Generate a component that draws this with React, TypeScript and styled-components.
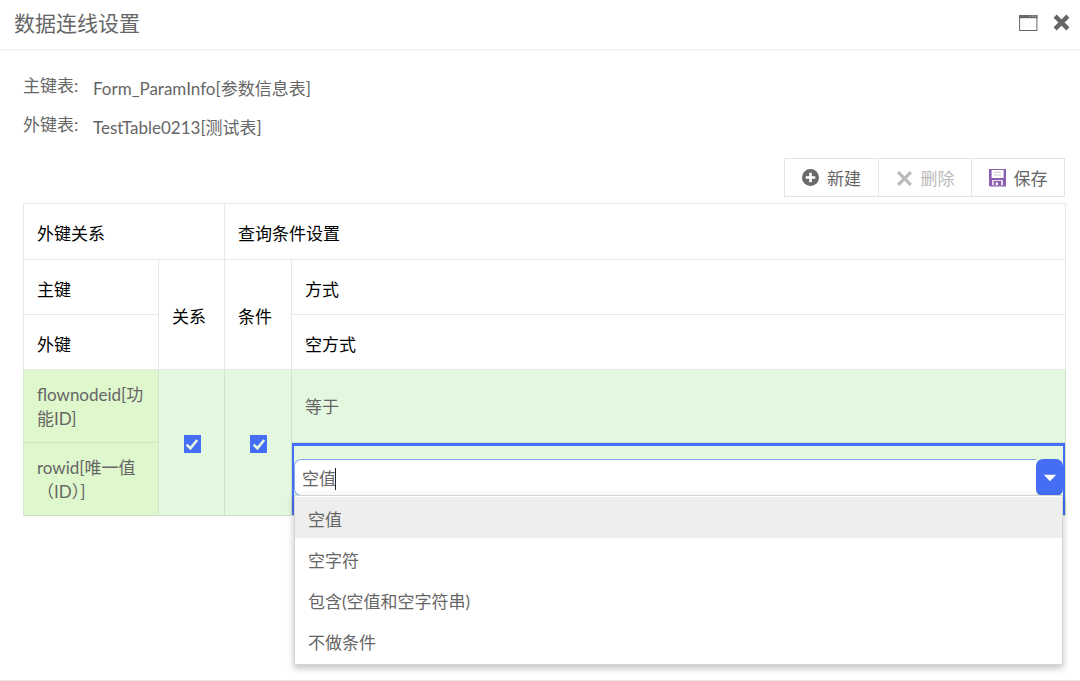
import React, { useState } from "react";
import styled, { createGlobalStyle, css } from "styled-components";

const GlobalStyle = createGlobalStyle`
  *, *::before, *::after { box-sizing: border-box; }
  body {
    margin: 0;
    background: #fff;
    color: #666;
    font-family: Lato, "Noto Sans CJK SC", sans-serif;
    font-size: 17px;
    line-height: 24px;
  }
  button, input { font: inherit; color: inherit; }
`;

const Dialog = styled.main`
  display: flex;
  flex-direction: column;
  min-height: 100vh;
  border-bottom: 1px solid #e6e6e6;
`;

const DialogHeader = styled.header`
  display: flex;
  align-items: center;
  justify-content: space-between;
  height: 51px;
  padding: 0 10px 4px 14px;
  border-bottom: 2px solid #f3f3f3;
`;

const Title = styled.h1`
  margin: 0;
  font-size: 21px;
  line-height: 32px;
  font-weight: 400;
`;

const WindowActions = styled.div`
  display: flex;
  align-items: center;
  gap: 14px;
`;

const IconButton = styled.button`
  display: flex;
  padding: 0;
  border: 0;
  background: none;
`;

const DialogBody = styled.div`
  flex: 1;
  padding: 23px 14px 24px 23px;
`;

const Info = styled.dl`
  display: grid;
  grid-template-columns: 70px 1fr;
  row-gap: 12px;
  margin: 0;
`;

const InfoLabel = styled.dt`
  line-height: 24px;
`;

const InfoValue = styled.dd`
  margin: 0;
  padding-top: 3px;
`;

const Toolbar = styled.div`
  display: flex;
  width: fit-content;
  margin: 18px 1px 6px auto;
  border: 1px solid #e4e4e4;
`;

const ToolButton = styled.button`
  display: flex;
  align-items: center;
  justify-content: center;
  gap: 8px;
  width: 93px;
  height: 37px;
  padding: 3px 0 0;
  border: 0;
  background: #fff;

  svg {
    margin-bottom: 2px;
  }
  & + & {
    border-left: 1px solid #e4e4e4;
  }
  &:disabled {
    color: #bbb;
  }
`;

const Grid = styled.table`
  width: 100%;
  table-layout: fixed;
  border-collapse: collapse;
`;

const HeadCell = styled.th`
  height: 55px;
  padding: 5px 12px 0 13px;
  border: 1px solid #e8e8e8;
  color: #000;
  font-weight: 400;
  text-align: left;
`;

const GroupHeadCell = styled(HeadCell)`
  height: 56px;
`;

const Cell = styled.td<{ $tone?: "key" | "plain"; $center?: boolean }>`
  height: 73px;
  padding: 2px 12px 0 13px;
  border: 1px solid #cde4c9;
  border-left-color: #d2e8cf;
  background: ${({ $tone }) => ($tone === "key" ? "#dff7cc" : "#e4f8e0")};
  text-align: ${({ $center }) => ($center ? "center" : "left")};
`;

const EditingCell = styled(Cell)`
  position: relative;
  padding: 0;
`;

const EditFrame = styled.div`
  height: 72px;
  padding: 13px 0 0;
  border: 3px solid #456df5;
  border-width: 3px 2px 0;
`;

const ComboBox = styled.div`
  position: relative;
  display: flex;
  height: 37px;
`;

const ComboInput = styled.input`
  flex: 1;
  min-width: 0;
  padding: 3px 8px 0 7px;
  border: 1px solid #8aa5fa;
  border-right: 0;
  border-radius: 7px 0 0 7px;
  background: #fff;
  outline: 0;
  caret-color: transparent;
`;

const Caret = styled.span`
  position: absolute;
  top: 9px;
  left: calc(7px + 2em);
  width: 1px;
  height: 22px;
  background: #222;
`;

const ComboToggle = styled.button`
  display: flex;
  align-items: center;
  justify-content: center;
  width: 27px;
  padding: 0;
  border: 0;
  border-radius: 7px;
  background: #456df5;
`;

const Menu = styled.ul`
  position: absolute;
  top: 36px;
  left: 0;
  right: 0;
  z-index: 1;
  margin: 0;
  padding: 1px 0 3px;
  border: 1px solid #d6d6d6;
  background: #fff;
  box-shadow: 0 3px 7px rgba(0, 0, 0, 0.25);
  list-style: none;
`;

const MenuItem = styled.li<{ $active: boolean }>`
  height: 41px;
  padding: 11px 13px 6px;
  ${({ $active }) =>
    $active &&
    css`
      background: #eee;
    `}
`;

const CheckInput = styled.input`
  display: block;
  width: 17px;
  height: 18px;
  margin: 0 auto;
  appearance: none;
  background: #fff;
  border: 1px solid #456df5;

  &:checked {
    background: #456df5
      url("data:image/svg+xml,%3Csvg xmlns='http://www.w3.org/2000/svg' viewBox='0 0 16 16'%3E%3Cpath d='M2.6 8.6 6.4 12.3 13.2 4' fill='none' stroke='%23e4f8e0' stroke-width='2.6'/%3E%3C/svg%3E")
      center / 16px no-repeat;
  }
`;

const WindowIcon = () => (
  <svg width="20" height="18" viewBox="0 0 20 18" aria-hidden="true">
    <rect x=".6" y="1.5" width="17.3" height="15" fill="none" stroke="#666" />
    <path d="M0 1h18.4v3.2H0z" fill="#666" />
    <path d="M10.5 2.2H12M13 2.2h1.5M15.5 2.2H17" stroke="#bbb" />
  </svg>
);

const CrossIcon = ({ size, width }: { size: number; width: number }) => (
  <svg width={size} height={size} viewBox="0 0 16 16" aria-hidden="true">
    <path d="M2 2l12 12M14 2L2 14" stroke="currentColor" strokeWidth={width} />
  </svg>
);

const PlusIcon = () => (
  <svg width="17" height="18" viewBox="0 0 17 18" aria-hidden="true">
    <circle cx="8.5" cy="8.5" r="8.5" fill="#6a6a6a" />
    <path d="M8.5 3.7v9.6M3.7 8.5h9.6" stroke="#fff" strokeWidth="2.6" />
  </svg>
);

const SaveIcon = () => (
  <svg width="17" height="18" viewBox="0 0 17 18" aria-hidden="true">
    <path d="M0 0h17v17.5H1.2L0 16.3z" fill="#8a5fb0" />
    <path d="M2.6 1h12v8h-12z" fill="#fff" />
    <path d="M5 3.5h7M5 6h7" stroke="#c9c9c9" />
    <path d="M3.2 11.2h10.6v5H3.2z" fill="#fff" />
    <path d="M4.6 12h7.6v4.2H9v-2.6H6.6v2.6h-2z" fill="#8a5fb0" />
  </svg>
);

const ArrowIcon = () => (
  <svg width="14" height="8" viewBox="0 0 14 8" aria-hidden="true">
    <path d="M.8.8h12.4L7 7.2z" fill="#fff" />
  </svg>
);

const OPTIONS = ["空值", "空字符", "包含(空值和空字符串)", "不做条件"];

export default function App() {
  const [value, setValue] = useState(OPTIONS[0]);

  return (
    <>
      <GlobalStyle />
      <Dialog>
        <DialogHeader>
          <Title>数据连线设置</Title>
          <WindowActions>
            <IconButton type="button" aria-label="最大化">
              <WindowIcon />
            </IconButton>
            <IconButton type="button" aria-label="关闭">
              <CrossIcon size={17} width={4} />
            </IconButton>
          </WindowActions>
        </DialogHeader>
        <DialogBody>
          <Info>
            <InfoLabel>主键表:</InfoLabel>
            <InfoValue>Form_ParamInfo[参数信息表]</InfoValue>
            <InfoLabel>外键表:</InfoLabel>
            <InfoValue>TestTable0213[测试表]</InfoValue>
          </Info>
          <Toolbar>
            <ToolButton type="button">
              <PlusIcon />
              新建
            </ToolButton>
            <ToolButton type="button" disabled>
              <CrossIcon size={17} width={3} />
              删除
            </ToolButton>
            <ToolButton type="button">
              <SaveIcon />
              保存
            </ToolButton>
          </Toolbar>
          <Grid>
            <colgroup>
              <col style={{ width: 135 }} />
              <col style={{ width: 66 }} />
              <col style={{ width: 67 }} />
              <col />
            </colgroup>
            <thead>
              <tr>
                <GroupHeadCell colSpan={2}>外键关系</GroupHeadCell>
                <GroupHeadCell colSpan={2}>查询条件设置</GroupHeadCell>
              </tr>
              <tr>
                <HeadCell>主键</HeadCell>
                <HeadCell rowSpan={2}>关系</HeadCell>
                <HeadCell rowSpan={2}>条件</HeadCell>
                <HeadCell>方式</HeadCell>
              </tr>
              <tr>
                <HeadCell>外键</HeadCell>
                <HeadCell>空方式</HeadCell>
              </tr>
            </thead>
            <tbody>
              <tr>
                <Cell $tone="key">flownodeid[功能ID]</Cell>
                <Cell rowSpan={2} $center>
                  <CheckInput type="checkbox" defaultChecked aria-label="关系" />
                </Cell>
                <Cell rowSpan={2} $center>
                  <CheckInput type="checkbox" defaultChecked aria-label="条件" />
                </Cell>
                <Cell>等于</Cell>
              </tr>
              <tr>
                <Cell $tone="key">rowid[唯一值（ID）]</Cell>
                <EditingCell>
                  <EditFrame>
                    <ComboBox>
                      <ComboInput
                        role="combobox"
                        aria-label="空方式"
                        aria-expanded="true"
                        aria-controls="empty-mode-list"
                        value={value}
                        onChange={(e) => setValue(e.target.value)}
                      />
                      <Caret />
                      <ComboToggle type="button" aria-label="展开">
                        <ArrowIcon />
                      </ComboToggle>
                      <Menu id="empty-mode-list" role="listbox">
                        {OPTIONS.map((option) => (
                          <MenuItem
                            key={option}
                            role="option"
                            aria-selected={option === value}
                            $active={option === value}
                            onClick={() => setValue(option)}
                          >
                            {option}
                          </MenuItem>
                        ))}
                      </Menu>
                    </ComboBox>
                  </EditFrame>
                </EditingCell>
              </tr>
            </tbody>
          </Grid>
        </DialogBody>
      </Dialog>
    </>
  );
}
